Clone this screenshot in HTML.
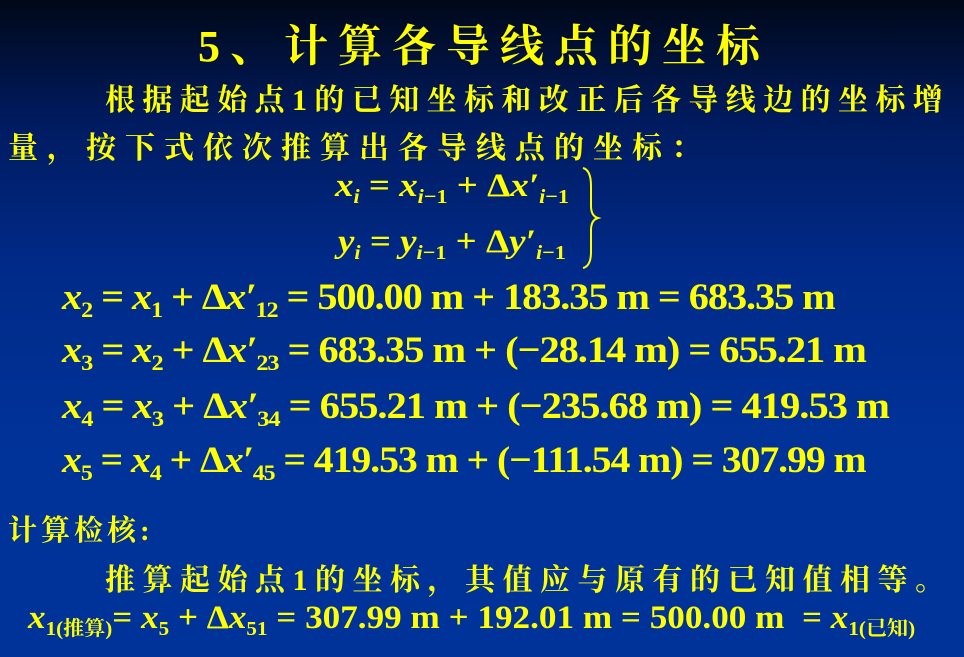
<!DOCTYPE html>
<html><head><meta charset="utf-8"><style>
body{margin:0;width:964px;height:657px;overflow:hidden;background:linear-gradient(180deg,#000818 0%,#001a5e 18%,#002a88 40%,#00339a 70%,#003399 100%);font-family:"Liberation Serif","Noto Serif CJK SC",serif;color:#ffff00;position:relative}
.a{position:absolute;white-space:nowrap;font-weight:bold;transform-origin:0 0}
.cn{font-family:"Liberation Serif","Noto Serif CJK SC",serif}
i{font-style:italic}
sub{font-size:60%;vertical-align:-0.35em;font-weight:bold}
</style></head><body>
<div class="a cn" style="left:198px;top:10px;font-size:44px;letter-spacing:10px">5、计算各导线点的坐标</div>
<div class="a cn" style="left:105px;top:75px;font-size:30px;letter-spacing:7.4px">根据起始点1的已知坐标和改正后各导线边的坐标增</div>
<div class="a cn" style="left:8px;top:123px;font-size:30px;letter-spacing:9px">量，按下式依次推算出各导线点的坐标：</div>
<div class="a" style="left:335px;top:168px;font-size:33px;transform:scaleX(1.12)"><i>x<sub>i</sub></i> = <i>x<sub>i</sub></i><sub>−1</sub> + Δ<i>x′<sub>i</sub></i><sub>−1</sub></div>
<div class="a" style="left:338px;top:224px;font-size:33px;transform:scaleX(1.12)"><i>y<sub>i</sub></i> = <i>y<sub>i</sub></i><sub>−1</sub> + Δ<i>y′<sub>i</sub></i><sub>−1</sub></div>
<svg class="a" style="left:580px;top:166px" width="24" height="104"><path d="M3 2 Q11 4 11 20 L11 40 Q11 50 18 52 Q11 54 11 64 L11 86 Q11 100 3 102" fill="none" stroke="#ffff00" stroke-width="2"/></svg>
<div class="a" style="left:62px;top:276px;font-size:37px;letter-spacing:-1px;transform:scaleX(1.09)"><i>x</i><sub>2</sub> = <i>x</i><sub>1</sub> + Δ<i>x′</i><sub>12</sub> = 500.00 m + 183.35 m = 683.35 m</div>
<div class="a" style="left:62px;top:329px;font-size:37px;letter-spacing:-1px;transform:scaleX(1.095)"><i>x</i><sub>3</sub> = <i>x</i><sub>2</sub> + Δ<i>x′</i><sub>23</sub> = 683.35 m + (−28.14 m) = 655.21 m</div>
<div class="a" style="left:62px;top:385px;font-size:37px;letter-spacing:-1px;transform:scaleX(1.1)"><i>x</i><sub>4</sub> = <i>x</i><sub>3</sub> + Δ<i>x′</i><sub>34</sub> = 655.21 m + (−235.68 m) = 419.53 m</div>
<div class="a" style="left:62px;top:439px;font-size:37px;letter-spacing:-1px;transform:scaleX(1.075)"><i>x</i><sub>5</sub> = <i>x</i><sub>4</sub> + Δ<i>x′</i><sub>45</sub> = 419.53 m + (−111.54 m) = 307.99 m</div>
<div class="a cn" style="left:8px;top:508px;font-size:29px;letter-spacing:4px">计算检核:</div>
<div class="a cn" style="left:105px;top:555px;font-size:30px;letter-spacing:7.5px">推算起始点1的坐标，其值应与原有的已知值相等。</div>
<div class="a" style="left:28px;top:600px;font-size:33px;transform:scaleX(1.065)"><i>x</i><sub>1(推算)</sub>= <i>x</i><sub>5</sub> + Δ<i>x</i><sub>51</sub> = 307.99 m + 192.01 m = 500.00 m &nbsp;= <i>x</i><sub>1(已知)</sub></div>
</body></html>
